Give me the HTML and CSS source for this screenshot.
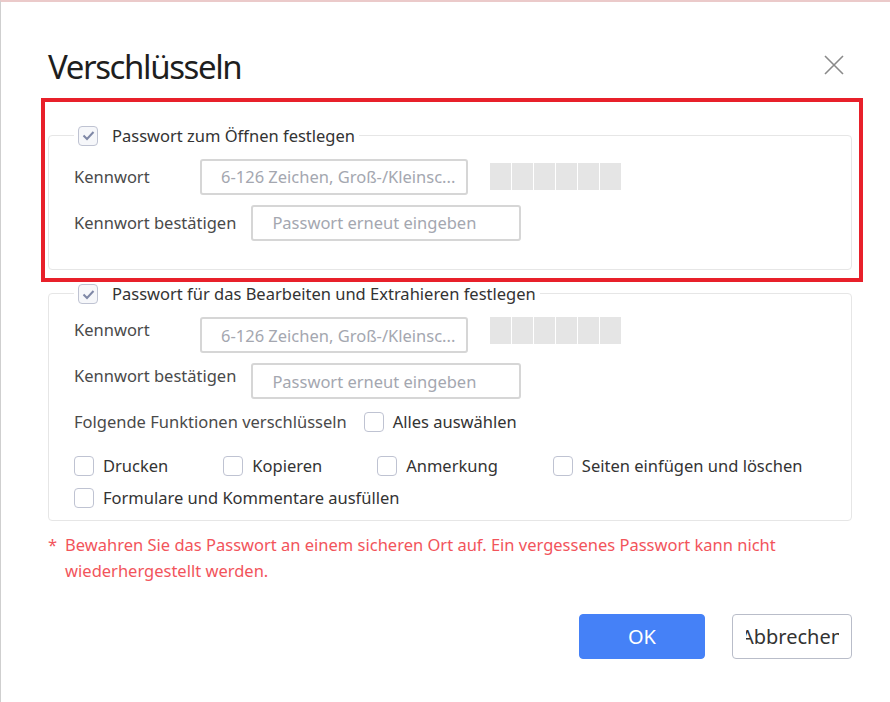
FILE: index.html
```html
<!DOCTYPE html>
<html lang="de">
<head>
    <meta charset="UTF-8">
    <title>Verschlüsseln</title>
    <link rel="stylesheet" href="styles.css">
</head>
<body>
    <div class="window">
        <div class="dialog-head">
            <h1 class="title">Verschlüsseln</h1>
            <button class="close" type="button" aria-label="Schließen">
                <svg width="20" height="20" viewBox="0 0 20 20"><path d="M1 1 L19 19 M19 1 L1 19" stroke="#8a8a8a" stroke-width="1.6" fill="none"/></svg>
            </button>
        </div>

        <!-- Kennwort zum Öffnen -->
        <fieldset class="group">
            <legend>
                <label class="check head">
                    <span class="box checked"><svg width="13" height="11" viewBox="0 0 13 11"><path d="M1.5 5.5 L5 9 L11.5 2" stroke="#7f88a6" stroke-width="2" fill="none"/></svg></span>
                    Passwort zum Öffnen festlegen
                </label>
            </legend>
            <div class="row">
                <span class="label">Kennwort</span>
                <input class="field" type="password" placeholder="6-126 Zeichen, Groß-/Kleinsc...">
                <div class="strength"><span></span><span></span><span></span><span></span><span></span><span></span></div>
            </div>
            <div class="row">
                <span class="label">Kennwort bestätigen</span>
                <input class="field wide" type="password" placeholder="Passwort erneut eingeben">
            </div>
        </fieldset>

        <!-- Kennwort zum Bearbeiten -->
        <fieldset class="group second">
            <legend>
                <label class="check head">
                    <span class="box checked"><svg width="13" height="11" viewBox="0 0 13 11"><path d="M1.5 5.5 L5 9 L11.5 2" stroke="#7f88a6" stroke-width="2" fill="none"/></svg></span>
                    Passwort für das Bearbeiten und Extrahieren festlegen
                </label>
            </legend>
            <div class="row top">
                <span class="label">Kennwort</span>
                <input class="field" type="password" placeholder="6-126 Zeichen, Groß-/Kleinsc...">
                <div class="strength"><span></span><span></span><span></span><span></span><span></span><span></span></div>
            </div>
            <div class="row top">
                <span class="label">Kennwort bestätigen</span>
                <input class="field wide" type="password" placeholder="Passwort erneut eingeben">
            </div>
            <div class="row funcs">
                <span class="label">Folgende Funktionen verschlüsseln</span>
                <label class="check"><span class="box"></span>Alles auswählen</label>
            </div>
            <div class="options">
                <label class="check"><span class="box"></span>Drucken</label>
                <label class="check"><span class="box"></span>Kopieren</label>
                <label class="check"><span class="box"></span>Anmerkung</label>
                <label class="check"><span class="box"></span>Seiten einfügen und löschen</label>
                <label class="check"><span class="box"></span>Formulare und Kommentare ausfüllen</label>
            </div>
        </fieldset>

        <p class="warning"><span class="star">*</span><span>Bewahren Sie das Passwort an einem sicheren Ort auf. Ein vergessenes Passwort kann nicht wiederhergestellt werden.</span></p>

        <div class="actions">
            <button class="btn primary" type="button">OK</button>
            <button class="btn" type="button"><span class="clip">Abbrechen</span></button>
        </div>

        <!-- Markierung -->
        <div class="highlight"></div>
    </div>
</body>
</html>
```

FILE: styles.css
```css
* {
    box-sizing: border-box;
}

body {
    margin: 0;
    font-family: "Noto Sans", "Open Sans", sans-serif;
    font-size: 16.5px;
    line-height: 22px;
    color: #333;
    background: #fff;
}

.window {
    position: relative;
    height: 702px;
    border-top: 2px solid #ebcaca;
    border-left: 1px solid #cfcfcf;
    padding: 0 38px 0 47px;
}

.dialog-head {
    display: flex;
    justify-content: space-between;
    align-items: flex-start;
    padding-top: 43px;
    height: 122px;
}

.title {
    margin: 0;
    font-size: 33px;
    font-weight: 400;
    line-height: 44px;
    color: #1e1e1e;
    letter-spacing: -1.4px;
}

.close {
    border: none;
    background: none;
    padding: 0;
    margin: 10px 8px 0 0;
    cursor: pointer;
}

.group {
    margin: 0;
    padding: 12px 0 28px 25px;
    border: 1px solid #e6e6e6;
    border-radius: 4px;
}

.group legend {
    margin-left: 0;
    padding: 0 4px;
}

.check {
    display: inline-flex;
    align-items: center;
    gap: 9px;
    line-height: 22px;
    cursor: pointer;
}

.check.head {
    gap: 14px;
}

.box {
    width: 20px;
    height: 20px;
    border: 1.5px solid #bfc3d2;
    border-radius: 4px;
    background: #fff;
    display: flex;
    align-items: center;
    justify-content: center;
}

.box.checked {
    background: #f6f7fa;
}

.row {
    display: flex;
    align-items: center;
    margin-bottom: 10px;
}

.row:last-child {
    margin-bottom: 0;
}

.row.top {
    align-items: flex-start;
}

.label {
    min-width: 111px;
    margin-right: 15px;
    color: #4a4a4a;
}

.row.top .label {
    padding-top: 2px;
}

.field {
    width: 268px;
    height: 36px;
    border: 2px solid #d6d6d6;
    border-radius: 3px;
    padding: 0 2px 0 19px;
    font-family: inherit;
    font-size: 16.5px;
    color: #333;
}

.field.wide {
    width: 270px;
}

.field::placeholder {
    color: #a4a7b0;
}

.strength {
    display: flex;
    gap: 1px;
    margin-left: 22px;
}

.strength span {
    width: 21px;
    height: 27px;
    background: #e5e5e5;
}

.funcs {
    margin-top: 12px;
}

.funcs .label {
    margin-right: 17px;
}

.options {
    display: flex;
    flex-wrap: wrap;
    column-gap: 55px;
    row-gap: 10px;
    margin-top: 22px;
}

.group.second {
    margin-top: 13px;
    padding-bottom: 11px;
}

.warning {
    display: flex;
    gap: 8px;
    margin: 11px 0 0;
    color: #f2545b;
    line-height: 26px;
}

.actions {
    display: flex;
    justify-content: flex-end;
    gap: 27px;
    margin-top: 30px;
}

.btn {
    width: 120px;
    height: 45px;
    border: 1px solid #b9bdc9;
    border-radius: 4px;
    background: #fff;
    font-family: inherit;
    font-size: 20px;
    color: #333;
    display: flex;
    align-items: center;
    justify-content: center;
    padding: 0;
}

.btn.primary {
    width: 126px;
    border-color: #4581f7;
    background: #4581f7;
    color: #fff;
}

.clip {
    display: flex;
    justify-content: center;
    width: 93px;
    overflow: hidden;
    white-space: nowrap;
}

.highlight {
    position: absolute;
    left: 40px;
    top: 96px;
    width: 822px;
    height: 184px;
    border: 4px solid #e8202a;
    pointer-events: none;
}
```
